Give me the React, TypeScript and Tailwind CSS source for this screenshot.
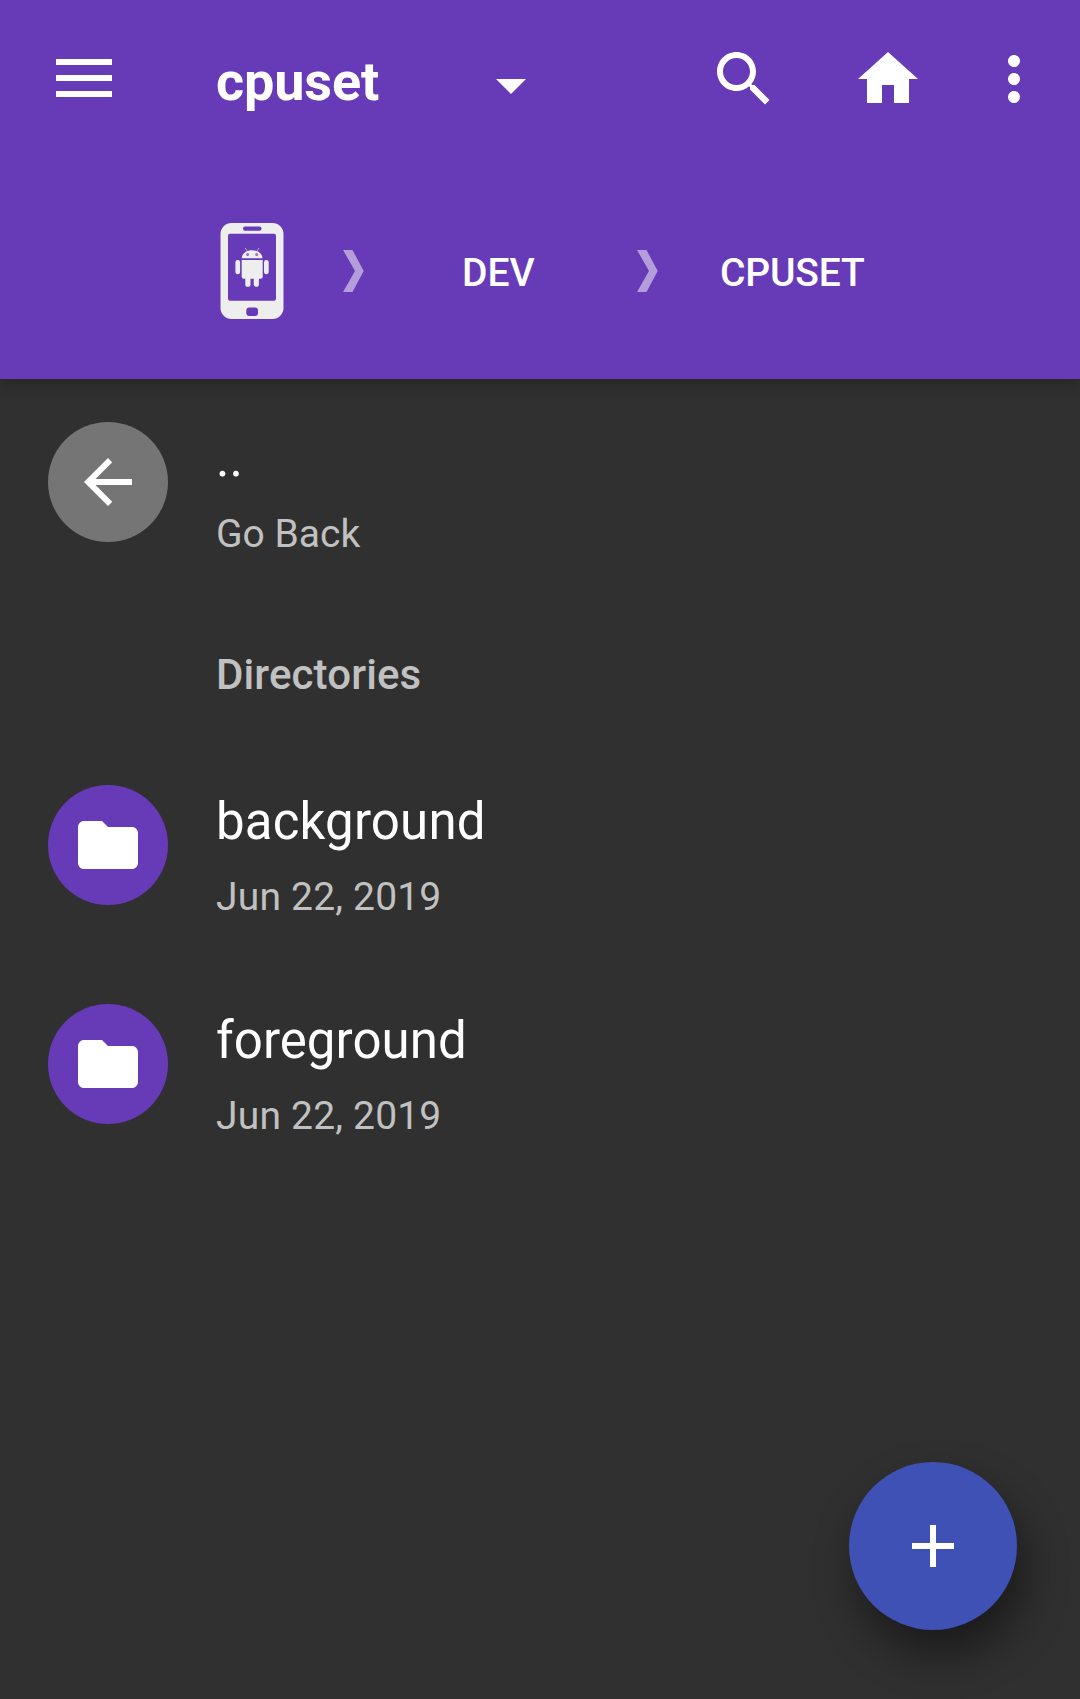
import React from 'react';

function Icon({ d }: { d: string }) {
  return (
    <svg viewBox="0 0 24 24" className="size-[72px] shrink-0 fill-current">
      <path d={d} />
    </svg>
  );
}

const SEARCH =
  'M15.5 14h-.79l-.28-.27C15.41 12.59 16 11.11 16 9.5 16 5.91 13.09 3 9.5 3S3 5.91 3 9.5 5.91 16 9.5 16c1.61 0 3.09-.59 4.23-1.57l.27.28v.79l5 4.99L20.49 19l-4.99-5zm-6 0C7.01 14 5 11.99 5 9.5S7.01 5 9.5 5 14 7.01 14 9.5 11.99 14 9.5 14z';
const HOME = 'M10 20v-6h4v6h5v-8h3L12 3 2 12h3v8z';
const MORE =
  'M12 8c1.1 0 2-.9 2-2s-.9-2-2-2-2 .9-2 2 .9 2 2 2zm0 2c-1.1 0-2 .9-2 2s.9 2 2 2 2-.9 2-2-.9-2-2-2zm0 6c-1.1 0-2 .9-2 2s.9 2 2 2 2-.9 2-2-.9-2-2-2z';
const BACK = 'M20 11H7.83l5.59-5.59L12 4l-8 8 8 8 1.41-1.41L7.83 13H20v-2z';
const FOLDER =
  'M10 4H4c-1.1 0-1.99.9-1.99 2L2 18c0 1.1.9 2 2 2h16c1.1 0 2-.9 2-2V8c0-1.1-.9-2-2-2h-8l-2-2z';
const PLUS = 'M19 13h-6v6h-2v-6H5v-2h6V5h2v6h6v2z';

function PhoneIcon() {
  return (
    <svg viewBox="0 0 64 96" className="ml-[220px] h-24 w-16 shrink-0">
      <rect x="0.5" width="63" height="96" rx="11" fill="#eeeeee" />
      <g fill="#673ab7">
        <rect x="23" y="3.5" width="18.5" height="4.2" rx="2" />
        <rect x="8" y="10.7" width="48" height="67" rx="2" />
        <rect x="26.3" y="84.5" width="11.7" height="8.5" rx="3" />
      </g>
      <g fill="#eeeeee">
        <path d="M21.7 35.3C22 30.5 26 27.2 32 27.2S42.2 30.5 42.500 35.3Z" />
        <path d="M21.7 36.900H42.700V53.700a2 2 0 0 1-2 2H23.700a2 2 0 0 1-2-2Z" />
        <rect x="15.4" y="37" width="4.7" height="14.2" rx="2.3" />
        <rect x="44" y="37" width="4.7" height="14.2" rx="2.3" />
        <rect x="25.3" y="50" width="5.2" height="13.8" rx="2.6" />
        <rect x="33.7" y="50" width="5.2" height="13.8" rx="2.6" />
      </g>
      <path d="M25.300 25l2.200 3.700M39 25l-2.200 3.700" stroke="#eeeeee" strokeWidth="1" opacity="0.6" />
      <g fill="#673ab7" opacity="0.7">
        <circle cx="27.6" cy="31.500" r="1.500" />
        <circle cx="36.700" cy="31.500" r="1.500" />
      </g>
    </svg>
  );
}

function Chevron() {
  return (
    <svg viewBox="0 0 21 42" className="h-[42px] w-[21px] shrink-0 fill-[#b39ddb]">
      <path d="M0 0H9.500L20.700 21L9.500 42H0L12 21Z" />
    </svg>
  );
}

interface RowProps {
  icon: string;
  color: string;
  title: string;
  subtitle: string;
  titleClass?: string;
  subtitleClass?: string;
}

function Row({ icon, color, title, subtitle, titleClass = '', subtitleClass = '' }: RowProps) {
  return (
    <div className="flex h-[120px] items-start pl-12">
      <div className={`flex size-[120px] shrink-0 items-center justify-center rounded-full ${color}`}>
        <Icon d={icon} />
      </div>
      <div className="ml-12 pt-[7px]">
        <div className={`h-[60px] text-[51px] leading-[60px] ${titleClass}`}>{title}</div>
        <div className={`mt-[22px] text-[39px] leading-[46px] text-[#c1c1c1] ${subtitleClass}`}>{subtitle}</div>
      </div>
    </div>
  );
}

export default function App() {
  return (
    <div className="relative flex h-[1699px] w-[1080px] flex-col overflow-hidden bg-[#303030] font-['Roboto',sans-serif] text-white">
      <header className="h-[379px] shrink-0 bg-[#673ab7] shadow-[0_3px_12px_rgba(0,0,0,0.28)]">
        <div className="flex h-[158px] items-center">
          <div className="-mt-0.5 ml-14 flex w-14 flex-col gap-2.5">
            <span className="h-1.5 bg-white" />
            <span className="h-1.5 bg-white" />
            <span className="h-1.5 bg-white" />
          </div>
          <h1 className="ml-26 w-[280px] pt-1.5 text-[54px] leading-[60px] font-bold tracking-[-0.15px]">cpuset</h1>
          <svg viewBox="0 0 30 15" className="mt-[15px] h-[15px] w-[30px] fill-white">
            <path d="M0 0h30L15 15z" />
          </svg>
          <div className="ml-[182px] flex gap-[72px]">
            <Icon d={SEARCH} />
            <Icon d={HOME} />
          </div>
          <div className="ml-[54px]">
            <Icon d={MORE} />
          </div>
        </div>
        <nav className="flex items-center pt-[65px] text-[39px] leading-[46px] font-medium">
          <PhoneIcon />
          <div className="ml-[59px]"><Chevron /></div>
          <span className="ml-[98px] w-[175px] pt-1">DEV</span>
          <Chevron />
          <span className="ml-[62px] pt-1 tracking-[-0.2px]">CPUSET</span>
        </nav>
      </header>
      <main className="pt-[43px]">
        <Row icon={BACK} color="bg-[#757575]" title=".." subtitle="Go Back" />
        <h2 className="mt-[108px] ml-[216px] h-[50px] text-[42px] leading-[50px] font-medium tracking-[0.12px] text-[#c1c1c1]">Directories</h2>
        <div className="mt-[85px] flex flex-col gap-[99px]">
          <Row
            icon={FOLDER}
            color="bg-[#673ab7]"
            title="background"
            subtitle="Jun 22, 2019"
            titleClass="tracking-[0.17px]"
            subtitleClass="tracking-[0.2px]"
          />
          <Row
            icon={FOLDER}
            color="bg-[#673ab7]"
            title="foreground"
            subtitle="Jun 22, 2019"
            titleClass="tracking-[0.05px]"
            subtitleClass="tracking-[0.2px]"
          />
        </div>
      </main>
      <button
        aria-label="Add"
        className="absolute right-[63px] bottom-[69px] flex size-[168px] items-center justify-center rounded-full bg-[#3f51b5] shadow-[8px_24px_44px_rgba(0,0,0,0.45)]"
      >
        <Icon d={PLUS} />
      </button>
    </div>
  );
}
